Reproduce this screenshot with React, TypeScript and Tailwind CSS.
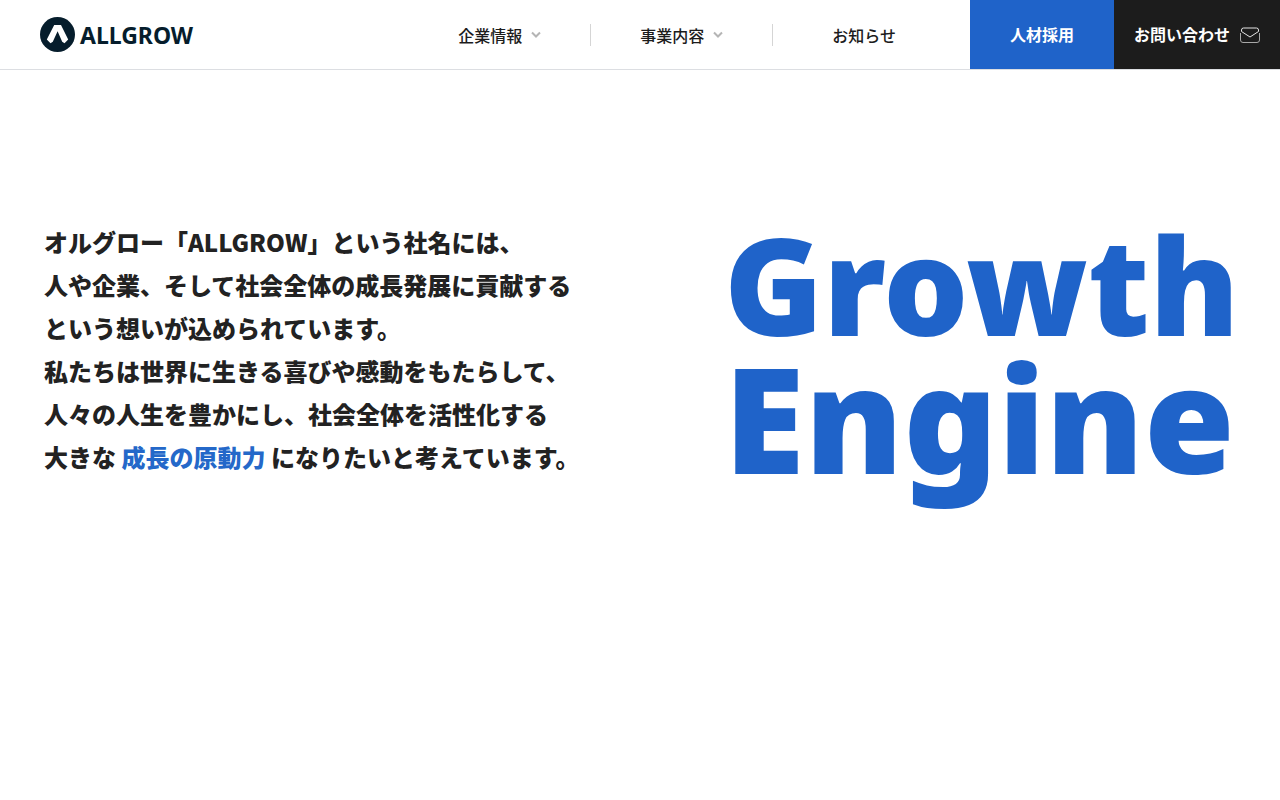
import React from "react";

const Logo = () => {
    return (
        <a href="#" className="flex items-center gap-[5px] text-[#061d2c]">
            <svg width="35" height="35" viewBox="0 0 35 35" aria-hidden="true">
                <circle cx="17.5" cy="17.5" r="17.5" fill="currentColor" />
                <path d="M14.2 8h6.8l7.2 14.6-3.7 3.6-2.3-1.4-4.6-10.6-4.8 10.6-2.3 1.4-3.7-3.6z" fill="#fff" />
            </svg>
            <span className="font-['Noto_Sans',sans-serif] text-[23px] leading-7 font-bold">ALLGROW</span>
        </a>
    )
}

const Chevron = () => {
    return (
        <svg width="10" height="8" viewBox="0 0 10 8" fill="none" stroke="#b5b5b5" strokeWidth="2" aria-hidden="true">
            <path d="M1 1.5l4 4 4-4" />
        </svg>
    )
}

const MailIcon = () => {
    return (
        <svg width="20" height="16" viewBox="0 0 20 16" fill="none" strokeWidth="1" aria-hidden="true">
            <path d="M0.5 6v7a2.5 2.5 0 0 0 2.5 2.5h14a2.5 2.5 0 0 0 2.5-2.5V6" stroke="#a8a8a8" />
            <path d="M1.5 4.5V3a2 2 0 0 1 2-2h13a2 2 0 0 1 2 2v1.500L10 10z" stroke="#e4e4e4" />
        </svg>
    )
}

const Header = () => {
    return (
        <header className="flex justify-between border-b border-[#dcdee2] bg-white pl-10">
            <Logo />
            <div className="flex h-[69px]">
                <nav className="flex items-center text-base font-medium text-[#1c1c1c]">
                    <button type="button" className="flex h-[22px] items-center gap-[9px] border-r border-[#d5d5d5] px-[49px]">
                        企業情報
                        <Chevron />
                    </button>
                    <button type="button" className="flex h-[22px] items-center gap-[9px] border-r border-[#d5d5d5] px-[49px]">
                        事業内容
                        <Chevron />
                    </button>
                    <a href="#" className="pr-[74px] pl-[59px]">お知らせ</a>
                </nav>
                <a href="#" className="flex items-center bg-[#1f63c9] px-10 pb-[2px] font-bold text-white">人材採用</a>
                <a href="#" className="flex items-center gap-[10px] bg-[#1c1c1c] px-5 font-bold text-white">
                    <span className="pb-[2px]">お問い合わせ</span>
                    <MailIcon />
                </a>
            </div>
        </header>
    )
}

const App = () => {
    return (
        <div className="min-h-screen bg-white font-['Noto_Sans_CJK_JP',sans-serif]">
            <Header />
            <main className="flex items-start justify-between pt-[150px] pr-12 pl-11">
                <p className="text-2xl leading-[43px] font-black whitespace-nowrap text-[#222222]">
                    オルグロー「ALLGROW」という社名には、<br />
                    人や企業、そして社会全体の成長発展に貢献する<br />
                    という想いが込められています。<br />
                    私たちは世界に生きる喜びや感動をもたらして、<br />
                    人々の人生を豊かにし、社会全体を活性化する<br />
                    大きな <span className="text-[#2468c9]">成長の原動力</span> になりたいと考えています。
                </p>
                <h1 className="flex w-[508px] flex-col font-['Noto_Sans',sans-serif] font-black text-[#1f63c9]">
                    <span className="text-[134px] leading-[128px]">Growth</span>
                    <span className="text-[147px] leading-[138px]">Engine</span>
                </h1>
            </main>
        </div>
    )
}

export default App;
